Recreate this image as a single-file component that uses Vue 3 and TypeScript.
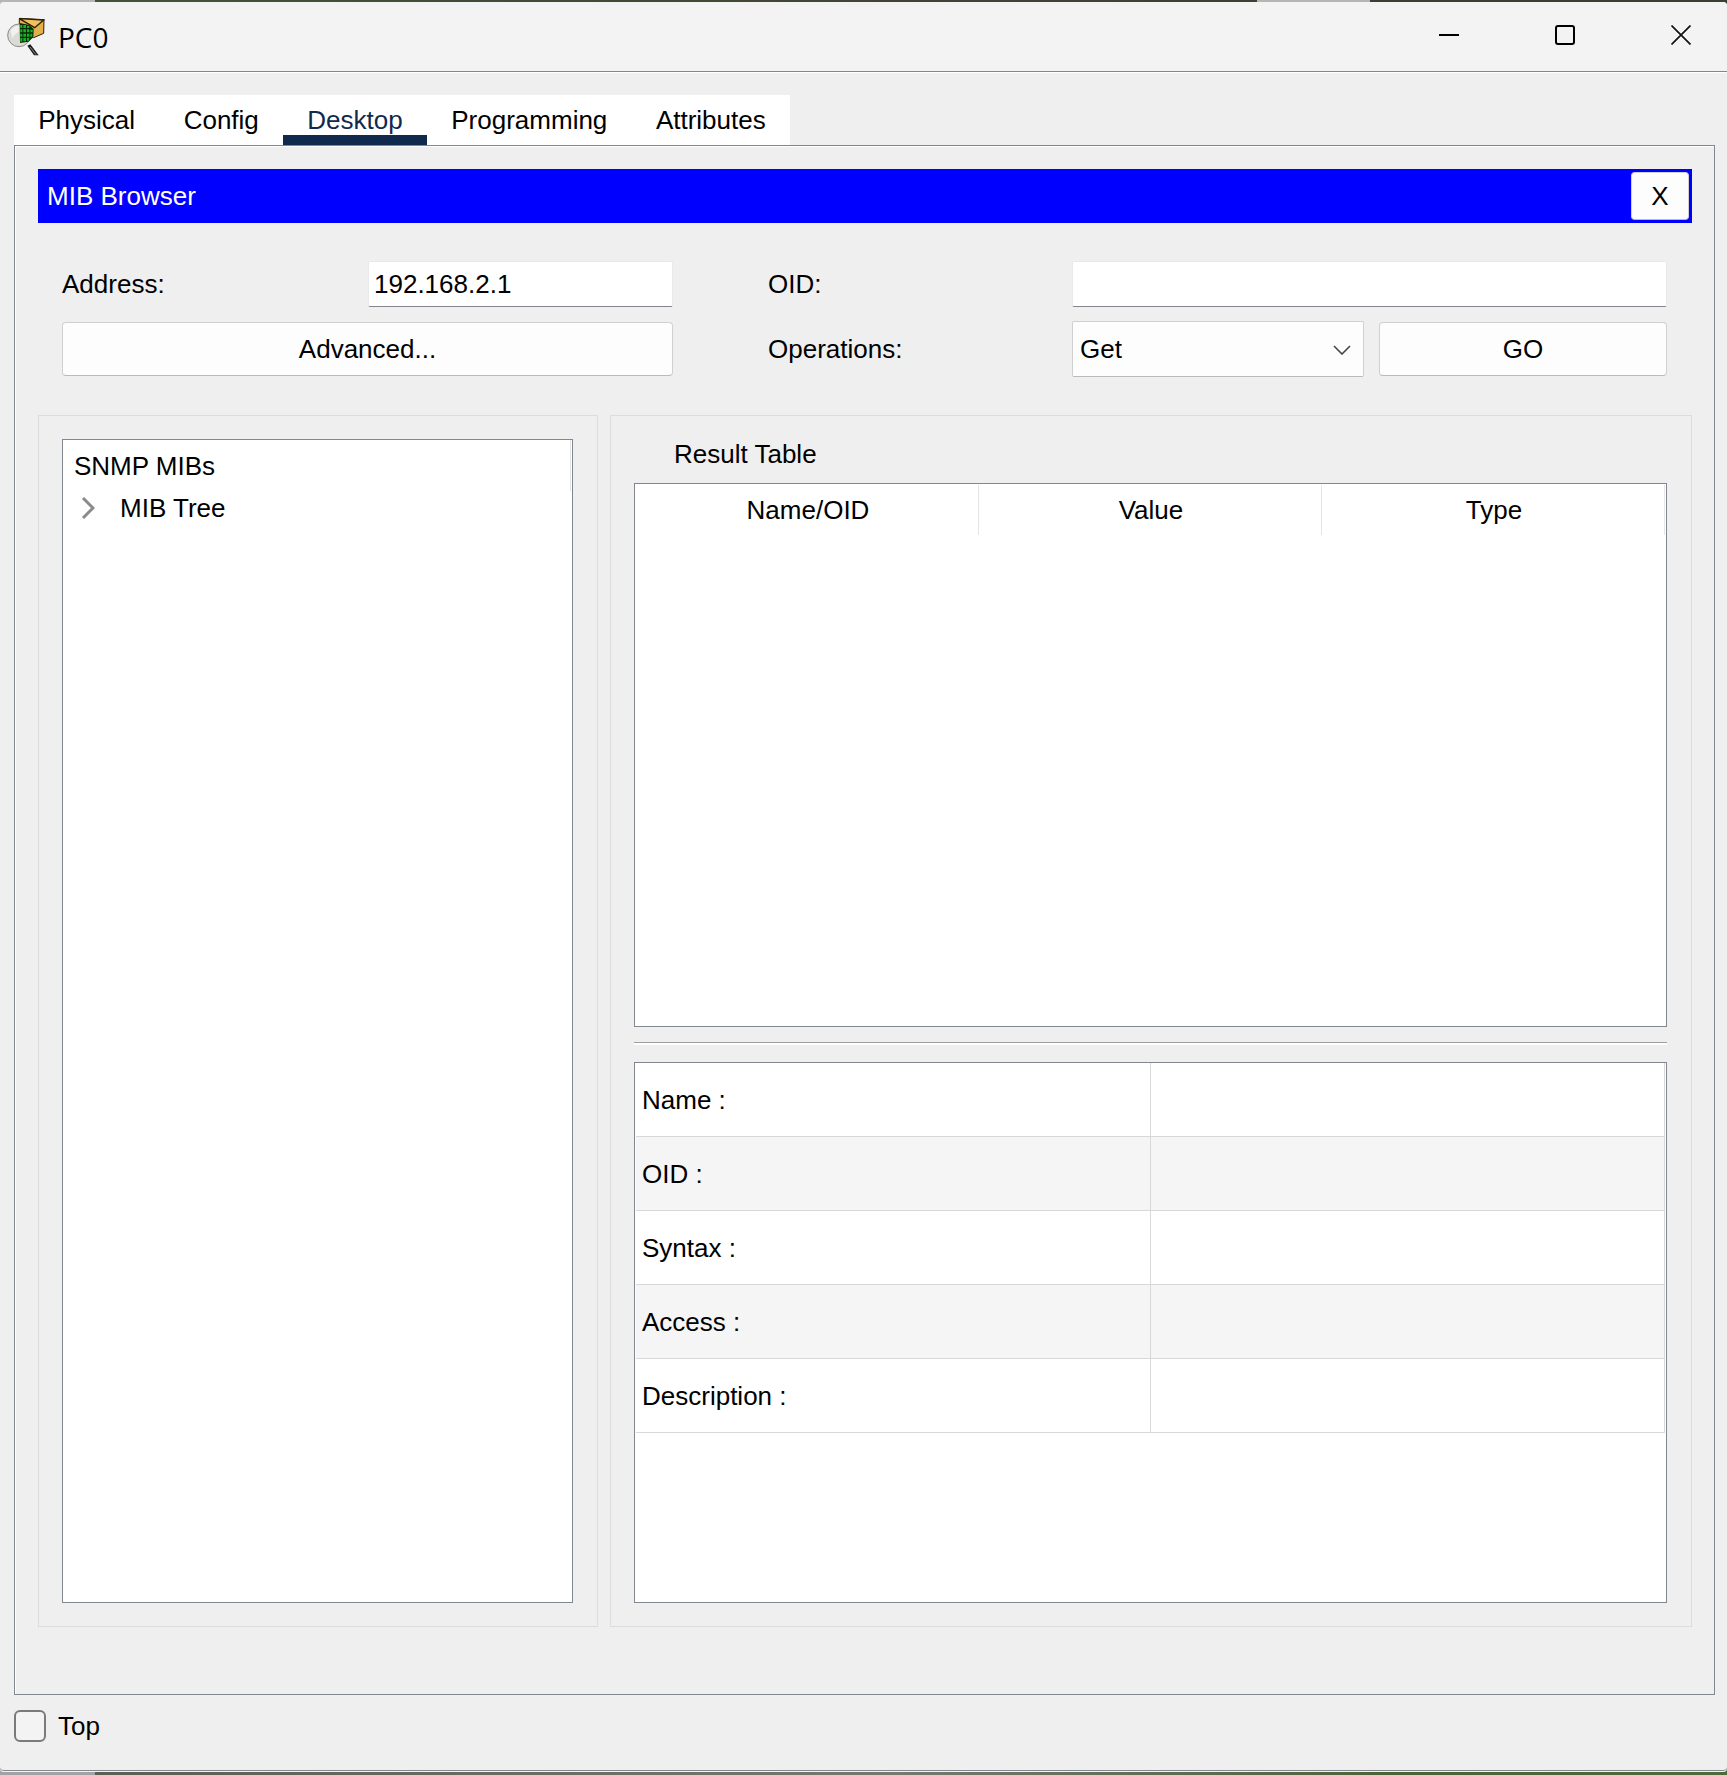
<script setup lang="ts">
import { ref } from 'vue'

const tabs: string[] = ['Physical', 'Config', 'Desktop', 'Programming', 'Attributes']
const activeTab = ref('Desktop')

const address = ref('192.168.2.1')
const oid = ref('')
const operation = ref('Get')
const operations: string[] = ['Get', 'Set', 'Get Bulk']

const resultColumns: string[] = ['Name/OID', 'Value', 'Type']

interface Detail {
  label: string
  value: string
}
const details: Detail[] = [
  { label: 'Name :', value: '' },
  { label: 'OID :', value: '' },
  { label: 'Syntax :', value: '' },
  { label: 'Access :', value: '' },
  { label: 'Description :', value: '' },
]

const onTop = ref(false)
</script>

<template>
  <div class="desktop">
    <div class="window">
      <header class="titlebar">
        <svg class="app-icon" viewBox="18 48 120 120" aria-hidden="true">
          <path d="M82 134 L91 130 L116 163 L102 163 Z" fill="#1b1b1b" />
          <path d="M90 138 L108 161" stroke="#8f8f8f" stroke-width="3" />
          <path d="M58 52 L132 56 L131 97 L101 110 L58 96 Z" fill="#e3b04b" stroke="#2a2008" stroke-width="3" />
          <circle cx="57" cy="103" r="34" fill="#dcdad6" stroke="#8a8a8a" stroke-width="3" />
          <path d="M32 88 Q42 74 56 74 L56 92 Q44 98 36 112 Z" fill="#f2f1ee" />
          <path d="M59 66 L88 72 L101 84 L100 108 L86 122 L60 126 Z" fill="#0a2a0a" />
          <g fill="#12b51f">
            <path d="M61 72h6v9h-6z M70 72h8v9h-8z M81 74h7v7h-7z" />
            <path d="M61 85h6v9h-6z M70 85h8v9h-8z M81 85h7v9h-7z M91 86h7v8h-7z" />
            <path d="M61 98h6v9h-6z M70 98h8v9h-8z M81 98h7v9h-7z M91 98h6v9h-6z" />
            <path d="M61 111h6v11h-6z M70 111h8v10h-8z M81 111h6v8h-6z" />
          </g>
          <path d="M58 53 L104 80 L131 57 Z" fill="#efc15c" stroke="#2a2008" stroke-width="4" />
        </svg>
        <h1 class="title">PC0</h1>
        <div class="controls">
          <button type="button" aria-label="Minimize">
            <svg viewBox="0 0 20 20"><path d="M0 10H20" stroke="#000" stroke-width="2" /></svg>
          </button>
          <button type="button" aria-label="Maximize">
            <svg viewBox="0 0 20 20">
              <rect x="1" y="1" width="18" height="18" rx="2" fill="none" stroke="#000" stroke-width="2" />
            </svg>
          </button>
          <button type="button" aria-label="Close">
            <svg viewBox="0 0 20 20"><path d="M0.5 0.5L19.5 19.5M19.5 0.5L0.5 19.5" stroke="#111" stroke-width="1.7" /></svg>
          </button>
        </div>
      </header>

      <main class="body">
        <div class="tabs" role="tablist">
          <button
            v-for="tab in tabs"
            :key="tab"
            type="button"
            role="tab"
            class="tab"
            :class="{ active: tab === activeTab }"
            :aria-selected="tab === activeTab"
            @click="activeTab = tab"
          >
            {{ tab }}
          </button>
        </div>

        <section class="panel">
          <div class="app-header">
            <h2>MIB Browser</h2>
            <button type="button" class="btn close-app">X</button>
          </div>

          <form class="query" @submit.prevent>
            <label class="c-label1" for="address">Address:</label>
            <input id="address" v-model="address" class="field c-address" type="text" />
            <label class="c-label2" for="oid">OID:</label>
            <input id="oid" v-model="oid" class="field c-oid" type="text" />
            <button type="button" class="btn c-advanced">Advanced...</button>
            <label class="c-label2" for="operation">Operations:</label>
            <div class="select c-select">
              <select id="operation" v-model="operation">
                <option v-for="op in operations" :key="op">{{ op }}</option>
              </select>
              <svg viewBox="0 0 18 10" aria-hidden="true">
                <path d="M1 1L9 9L17 1" fill="none" stroke="#444" stroke-width="1.6" />
              </svg>
            </div>
            <button type="submit" class="btn c-go">GO</button>
          </form>

          <div class="split">
            <div class="group">
              <div class="view">
                <div class="tree-head">SNMP MIBs</div>
                <ul class="tree">
                  <li>
                    <svg viewBox="0 0 14 22" aria-hidden="true">
                      <path d="M2 1L12 11L2 21" fill="none" stroke="#8b8b8b" stroke-width="3" />
                    </svg>
                    <span>MIB Tree</span>
                  </li>
                </ul>
              </div>
            </div>

            <div class="group results">
              <h3>Result Table</h3>
              <div class="view result-view">
                <table>
                  <thead>
                    <tr>
                      <th v-for="col in resultColumns" :key="col" scope="col">{{ col }}</th>
                    </tr>
                  </thead>
                </table>
              </div>
              <hr />
              <div class="view detail-view">
                <table>
                  <tbody>
                    <tr v-for="d in details" :key="d.label">
                      <th scope="row">{{ d.label }}</th>
                      <td>{{ d.value }}</td>
                    </tr>
                  </tbody>
                </table>
              </div>
            </div>
          </div>
        </section>

        <label class="top-check">
          <input v-model="onTop" type="checkbox" />
          <span>Top</span>
        </label>
      </main>
    </div>
  </div>
</template>

<style>
body {
  margin: 0;
}
</style>

<style scoped>
* {
  box-sizing: border-box;
}

.desktop {
  display: flex;
  min-height: 100vh;
  padding: 2px 0 3px;
  background:
    linear-gradient(90deg, #b5b5b5 95px, #45523a 95px, #3c4034 1257px, #b5b5b5 1257px, #b5b5b5 1370px, #3a3f33 1370px) top / 100% 9px no-repeat,
    linear-gradient(90deg, #a3a3a3 95px, #5c5e56 95px, #77786f 900px, #4a6338 1400px, #4f6a3a) bottom / 100% 10px no-repeat;
  color: #000;
  font: 26px/30px 'Liberation Sans', Arial, sans-serif;
}

button,
input,
select {
  color: inherit;
  font: inherit;
}

h1,
h2,
h3 {
  margin: 0;
  font: inherit;
}

.window {
  display: flex;
  flex: 1;
  flex-direction: column;
  min-width: 0;
  overflow: hidden;
  border-bottom: 1px solid #f4f4f4;
  border-radius: 4px;
  background: #efefef;
  box-shadow: inset 0 -1px #82878f;
}

.titlebar {
  display: flex;
  align-items: center;
  height: 71px;
  border-bottom: 1px solid #fff;
  background: #f3f3f3;
  box-shadow: inset 0 -1px #82878f;
}

.app-icon {
  width: 40px;
  height: 40px;
  margin-left: 6px;
}

.title {
  flex: 1;
  margin-left: 12px;
  font-family: 'Open Sans', 'Noto Sans', sans-serif;
  font-size: 28px;
}

.controls {
  display: flex;
  align-self: flex-start;
  gap: 24px;
}

.controls button {
  display: flex;
  align-items: center;
  justify-content: center;
  width: 92px;
  height: 66px;
  padding: 0;
  border: 0;
  background: none;
}

.controls svg {
  width: 20px;
  height: 20px;
}

.body {
  display: flex;
  flex: 1;
  flex-direction: column;
  padding: 22px 12px 29px 14px;
}

.tabs {
  display: flex;
  align-self: flex-start;
  min-width: 776px;
  background: #fff;
}

.tab {
  flex: 1 1 auto;
  height: 50px;
  padding: 0 24px;
  border: 0;
  background: none;
}

.tab.active {
  color: #0f2a4d;
  box-shadow: inset 0 -10px #0f2a4d;
}

.panel {
  display: flex;
  flex: 1;
  flex-direction: column;
  padding: 23px 22px 67px 23px;
  border: 1px solid #82878f;
  box-shadow: inset 1px 1px #fff;
}

.app-header {
  display: flex;
  align-items: center;
  justify-content: space-between;
  height: 54px;
  padding: 0 3px 0 9px;
  background: #00f;
  color: #fff;
}

.btn {
  padding: 0;
  border: 1px solid #d0d0d0;
  border-bottom-color: #bababa;
  border-radius: 4px;
  background: #fdfdfd;
  color: #000;
}

.close-app {
  width: 58px;
  height: 48px;
}

.query {
  display: grid;
  grid-template-columns: 306fr 305fr 95fr 304fr 292fr 15fr 288fr;
  grid-template-rows: 46px 56px;
  row-gap: 14px;
  align-items: center;
  margin: 38px 25px 38px 24px;
}

.c-label1 { grid-column: 1; }
.c-address { grid-column: 2; }
.c-label2 { grid-column: 4; }
.c-oid { grid-column: 5 / 8; }
.c-advanced { grid-column: 1 / 3; }
.c-select { grid-column: 5; }
.c-go { grid-column: 7; }

.field {
  width: 100%;
  min-width: 0;
  height: 46px;
  padding: 0 5px;
  border: 1px solid #e9e9e9;
  border-bottom-color: #82868a;
  border-radius: 2px;
  outline: 0;
  background: #fff;
}

.query .btn {
  height: 54px;
}

.select {
  position: relative;
}

.select select {
  display: block;
  width: 100%;
  height: 56px;
  padding: 0 7px;
  border: 1px solid #d0d0d0;
  border-bottom-color: #bababa;
  border-radius: 2px;
  appearance: none;
  background: #fdfdfd;
}

.select svg {
  position: absolute;
  top: 24px;
  right: 13px;
  width: 18px;
  height: 10px;
  pointer-events: none;
}

.split {
  display: grid;
  flex: 1;
  grid-template-columns: 560fr 1082fr;
  gap: 12px;
}

.group {
  display: flex;
  flex-direction: column;
  min-width: 0;
  padding: 23px 24px 23px 23px;
  border: 1px solid #dcdcdc;
}

.view {
  flex: 1;
  border: 1px solid #82878f;
  background: #fff;
}

.tree-head {
  height: 51px;
  margin-right: 1px;
  padding: 11px;
  border-right: 1px solid #e5e5e5;
}

.tree {
  margin: 0;
  padding: 0;
  list-style: none;
}

.tree li {
  display: flex;
  align-items: center;
  gap: 25px;
  height: 34px;
  padding-left: 18px;
}

.tree svg {
  width: 14px;
  height: 22px;
}

.results h3 {
  margin: 0 0 14px 40px;
}

.view table {
  width: 100%;
  border-collapse: separate;
  border-spacing: 0;
  table-layout: fixed;
}

.view th {
  font-weight: 400;
}

.result-view {
  padding: 1px;
}

.result-view th {
  height: 50px;
  padding: 0 0 0 2px;
  border-right: 1px solid #e5e5e5;
}

.results hr {
  width: 100%;
  height: 3px;
  margin: 15px 0 17px;
  border: 0;
  border-top: 1px solid #a0a0a0;
  background: #fff;
}

.detail-view {
  padding: 0 1px;
}

.detail-view th,
.detail-view td {
  height: 74px;
  padding: 2px 6px 0;
  border-right: 1px solid #d8d8d8;
  border-bottom: 1px solid #d8d8d8;
  text-align: left;
}

.detail-view tr:nth-child(even) {
  background: #f5f5f5;
}

.top-check {
  display: flex;
  align-items: center;
  align-self: flex-start;
  gap: 12px;
  margin-top: 15px;
}

.top-check input {
  width: 32px;
  height: 32px;
  margin: 0;
  border: 2px solid #7a7a7a;
  border-radius: 6px;
  appearance: none;
  background: #f3f3f3;
}

.top-check input:checked {
  background: #0f2a4d;
}
</style>
